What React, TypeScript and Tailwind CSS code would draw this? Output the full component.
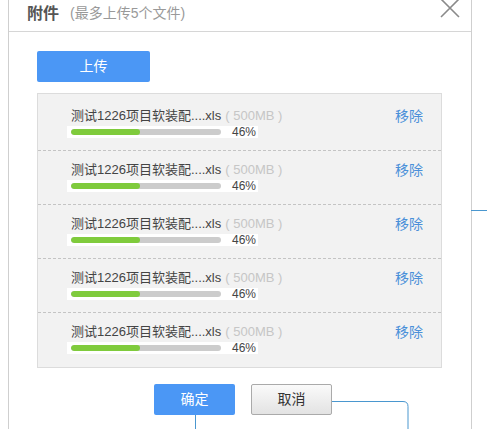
const files = [1, 2, 3, 4, 5].map((i) => ({
  id: i,
  name: "测试1226项目软装配....xls",
  size: "( 500MB )",
  percent: 46,
}));

const font = "font-['Liberation_Sans','Noto_Sans_CJK_SC',sans-serif]";

const App = () => {
  return (
    <div className={`relative h-[429px] w-[487px] overflow-hidden bg-white ${font}`}>
      <div className="relative ml-[8px] w-[464px] border-x border-[#cfcfcf] bg-white">
        {/* header */}
        <div className="flex h-[32px] items-center border-b border-[#d6d6d6] pl-[18px] pb-[4px]">
          <span className="text-[16px] font-bold text-[#555]">附件</span>
          <span className="ml-[11px] text-[14px] text-[#999]">(最多上传5个文件)</span>
          <svg
            className="absolute left-[430px] top-[-2px]"
            width="22"
            height="21"
            viewBox="0 0 22 21"
          >
            <path d="M2 1 L20 19 M20 1 L2 19" stroke="#8a8a8a" strokeWidth="1.6" fill="none" />
          </svg>
        </div>

        <div className="px-[28px] pt-[19px]">
          <button className="h-[31px] w-[113px] rounded-[2px] bg-[#4b97f5] text-[14px] text-white">
            上传
          </button>

          <div className="mt-[11px] h-[275px] w-[405px] border border-[#dcdcdc] bg-[#f2f2f2] pt-[3px]">
            {files.map((f, i) => (
              <div
                key={f.id}
                className={`flex h-[54px] items-start justify-between pl-[33px] pr-[18px] pt-[10px] ${
                  i < files.length - 1 ? "border-b border-dashed border-[#c4c4c4]" : ""
                }`}
              >
                <div>
                  <div className="flex h-[18px] items-center text-[13px] text-[#444]">
                    <span>{f.name}</span>
                    <span className="ml-[4px] text-[#c6c6c6]">{f.size}</span>
                  </div>
                  <div className="ml-[-4px] mt-px flex h-[12px] w-[191px] items-center bg-white pl-[4px]">
                    <div className="h-[6px] w-[150px] overflow-hidden rounded-full bg-[#cccccc]">
                      <div
                        className="h-full rounded-full bg-[#7fcb3c]"
                        style={{ width: `${f.percent}%` }}
                      />
                    </div>
                    <span className="ml-[11px] text-[12px] leading-none text-[#444]">
                      {f.percent}%
                    </span>
                  </div>
                </div>
                <a className="mt-[-1px] text-[14px] leading-[20px] text-[#4a90d9]">移除</a>
              </div>
            ))}
          </div>
        </div>

        <div className="flex gap-[16px] pl-[145px] pt-[16px] pb-[20px]">
          <button className="h-[31px] w-[81px] rounded-[2px] bg-[#4b97f5] text-[14px] text-white">
            确定
          </button>
          <button className="h-[31px] w-[81px] rounded-[2px] border border-[#aaaaaa] bg-gradient-to-b from-[#fafafa] to-[#e3e3e3] text-[14px] text-[#333]">
            取消
          </button>
        </div>
      </div>

      {/* connector lines drawn over the page */}
      <div className="absolute left-[471px] top-[210px] h-px w-[16px] bg-[#4a97cf]" />
      <svg className="absolute left-[332px] top-[400px]" width="80" height="29" viewBox="0 0 80 29">
        <path d="M0 1.5 H71 Q76 1.5 76 6.5 V29" stroke="#4a97cf" strokeWidth="1" fill="none" />
      </svg>
      <div className="absolute left-[195px] top-[415px] h-[20px] w-px bg-[#4a97cf]" />
    </div>
  );
};

export default App;
